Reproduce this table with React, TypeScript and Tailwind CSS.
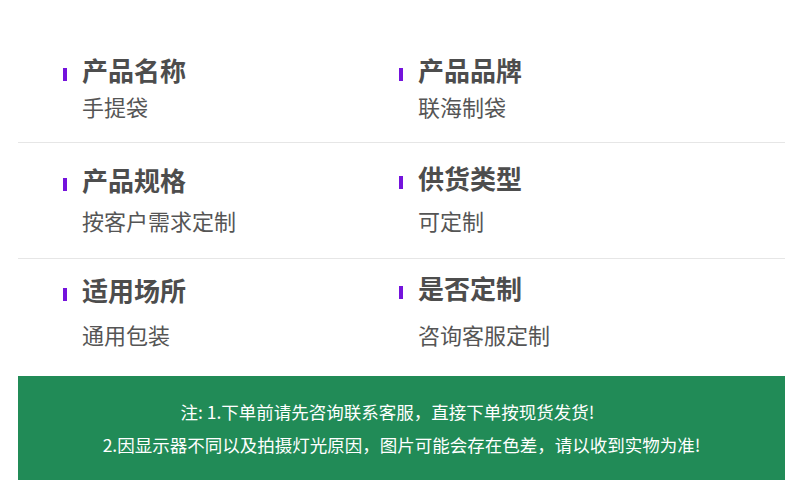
const rows = [
  {
    pad: "pt-[55px] h-[143px]",
    items: [
      { title: "产品名称", value: "手提袋", gap: "mt-[7px]" },
      { title: "产品品牌", value: "联海制袋", gap: "mt-[7px]" },
    ],
  },
  {
    pad: "pt-[22px] h-[116px]",
    items: [
      { title: "产品规格", value: "按客户需求定制", gap: "mt-[11px]" },
      { title: "供货类型", value: "可定制", gap: "mt-[13px]", shift: "-mt-[2px]" },
    ],
  },
  {
    pad: "pt-[16px] h-[117px]",
    items: [
      { title: "适用场所", value: "通用包装", gap: "mt-[15px]" },
      { title: "是否定制", value: "咨询客服定制", gap: "mt-[17px]", shift: "-mt-[2px]" },
    ],
  },
];

export default function App() {
  return (
    <div
      className="w-[800px] h-[492px] bg-white overflow-hidden"
      style={{ fontFamily: '"Noto Sans CJK SC", "Noto Sans", sans-serif' }}
    >
      <div className="ml-[18px] w-[767px]">
        {rows.map((row, i) => (
          <div
            key={i}
            className={`flex px-[45px] ${row.pad} ${i < rows.length - 1 ? "border-b border-[#e6e6e6]" : ""}`}
          >
            {row.items.map((item) => (
              <div key={item.title} className={`w-[336px] ${item.shift ?? ""}`}>
                <div className="flex items-center h-[30px]">
                  <span className="w-[4px] h-[13px] bg-[#7413dc] mt-[8px] mr-[15px]" />
                  <span className="text-[26px] leading-[30px] font-bold text-[#4d4d4d]">
                    {item.title}
                  </span>
                </div>
                <div
                  className={`${item.gap} pl-[19px] text-[22px] leading-[28px] text-[#555555]`}
                >
                  {item.value}
                </div>
              </div>
            ))}
          </div>
        ))}

        {/* note */}
        <div className="h-[104px] bg-[#218b57] flex flex-col items-center justify-center gap-[9px] text-white text-[17.5px] leading-[24px]">
          <p className="pr-[28px]">注: 1.下单前请先咨询联系客服，直接下单按现货发货!</p>
          <p>2.因显示器不同以及拍摄灯光原因，图片可能会存在色差，请以收到实物为准!</p>
        </div>
      </div>
    </div>
  );
}
